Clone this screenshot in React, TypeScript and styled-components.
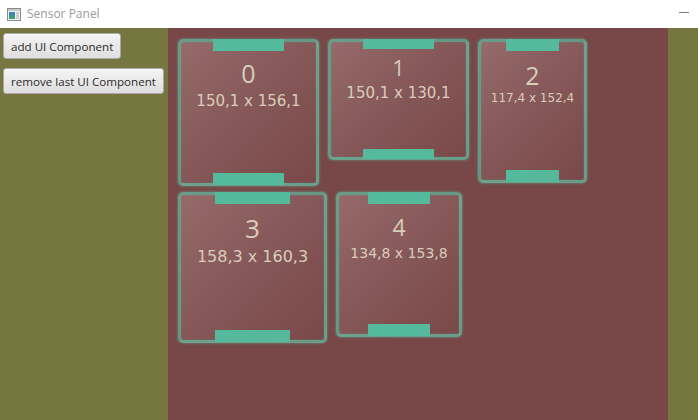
import React from "react";
import styled, { createGlobalStyle } from "styled-components";

const Global = createGlobalStyle`
  html, body { margin: 0; padding: 0; }
  body { font-family: "Open Sans", "Liberation Sans", sans-serif; background: #ffffff; }
  #root { width: 698px; height: 420px; overflow: hidden; }
`;

const Window = styled.div`
  width: 698px;
  height: 420px;
  display: flex;
  flex-direction: column;
`;

const TitleBar = styled.div`
  height: 28px;
  flex: none;
  background: #ffffff;
  display: flex;
  align-items: center;
  padding: 0 0 0 7px;
  box-sizing: border-box;
`;

const TitleText = styled.span`
  margin-left: 6px;
  font-size: 12px;
  color: #9a9a9a;
  flex: 1;
  margin-top: -2px;
`;

const MinimizeLine = styled.div`
  width: 10px;
  height: 1px;
  background: #7a7a7a;
  margin-right: 9px;
  margin-top: -4px;
`;

const Body = styled.div`
  flex: 1;
  display: flex;
  background: #767640;
`;

const Sidebar = styled.div`
  width: 168px;
  flex: none;
  display: flex;
  flex-direction: column;
  align-items: flex-start;
  gap: 9px;
  padding: 5px 0 0 3px;
  box-sizing: border-box;
`;

const Button = styled.button`
  height: 26px;
  padding: 0 7px;
  white-space: nowrap;
  font-family: "Open Sans", "Liberation Sans", sans-serif;
  font-size: 11.6px;
  color: #2a2a2a;
  background: linear-gradient(#f4f4f4, #dedede);
  border: 1px solid #a9a9a9;
  border-radius: 3px;
  box-shadow: inset 0 1px 0 #ffffff;
  cursor: default;
`;

const Stage = styled.div`
  width: 500px;
  flex: none;
  background: #784747;
  display: flex;
  flex-wrap: wrap;
  align-items: flex-start;
  align-content: flex-start;
  column-gap: 9px;
  row-gap: 6px;
  padding: 11px 10px;
  box-sizing: border-box;
`;

const RightGutter = styled.div`
  flex: 1;
`;

const Card = styled.div<{ $w: number; $h: number }>`
  width: ${(p) => p.$w}px;
  height: ${(p) => p.$h}px;
  box-sizing: border-box;
  border: 3px solid rgba(92, 186, 158, 0.7);
  border-radius: 5px;
  box-shadow: 0 0 2px 1px rgba(92, 186, 158, 0.35),
    inset 0 0 2px rgba(92, 186, 158, 0.4);
  background: linear-gradient(135deg, #966a6a 0%, #87595a 45%, #7a4848 100%);
  display: flex;
  flex-direction: column;
  align-items: center;
`;

const Bar = styled.div<{ $h: number; $top?: boolean }>`
  width: 52%;
  height: ${(p) => p.$h}px;
  flex: none;
  background: #55b99b;
  margin-top: ${(p) => (p.$top ? "-3px" : "0")};
  margin-bottom: ${(p) => (p.$top ? "0" : "-2px")};
`;

const Content = styled.div`
  flex: 1;
  display: flex;
  flex-direction: column;
  align-items: center;
  color: #d8cdb9;
  white-space: nowrap;
  font-family: "DejaVu Sans", "Open Sans", sans-serif;
`;

const Num = styled.div<{ $size: number; $top: number }>`
  font-family: "Open Sans", "DejaVu Sans", sans-serif;
  font-size: ${(p) => p.$size}px;
  line-height: ${(p) => Math.round(p.$size * 1.2)}px;
  margin-top: ${(p) => p.$top}px;
`;

const Dims = styled.div<{ $size: number; $gap: number }>`
  font-size: ${(p) => p.$size}px;
  line-height: ${(p) => Math.round(p.$size * 1.2)}px;
  margin-top: ${(p) => p.$gap}px;
`;

type C = {
  id: string;
  dims: string;
  w: number;
  h: number;
  bar: number;
  ns: number;
  ds: number;
  nc: number;
  dc: number;
};

const cards: C[] = [
  { id: "0", dims: "150,1 x 156,1", w: 141, h: 147, bar: 12, ns: 25, ds: 15, nc: 34, dc: 62 },
  { id: "1", dims: "150,1 x 130,1", w: 141, h: 121, bar: 10, ns: 21, ds: 15, nc: 29, dc: 54 },
  { id: "2", dims: "117,4 x 152,4", w: 109, h: 144, bar: 12, ns: 25, ds: 12, nc: 36, dc: 59 },
  { id: "3", dims: "158,3 x 160,3", w: 149, h: 151, bar: 12, ns: 26, ds: 16, nc: 36, dc: 64 },
  { id: "4", dims: "134,8 x 153,8", w: 126, h: 145, bar: 12, ns: 23, ds: 14, nc: 35, dc: 61 },
];

const AppIcon = () => (
  <svg width="14" height="13" viewBox="0 0 14 13">
    <defs>
      <linearGradient id="ig" x1="0" y1="0" x2="0" y2="1">
        <stop offset="0" stopColor="#3a7cc8" />
        <stop offset="1" stopColor="#3aa86a" />
      </linearGradient>
    </defs>
    <rect x="0.5" y="0.5" width="13" height="12" fill="#f2f2f2" stroke="#8a8a8a" />
    <rect x="1" y="1" width="12" height="2" fill="#c8c8c8" />
    <rect x="2" y="4" width="6" height="7" fill="url(#ig)" />
    <rect x="9" y="4" width="3" height="7" fill="#d0d0d0" />
  </svg>
);

export default function App() {
  return (
    <Window>
      <Global />
      <TitleBar>
        <AppIcon />
        <TitleText>Sensor Panel</TitleText>
        <MinimizeLine />
      </TitleBar>
      <Body>
        <Sidebar>
          <Button>add UI Component</Button>
          <Button>remove last UI Component</Button>
        </Sidebar>
        <Stage>
          {cards.map((c) => {
            const l1 = Math.round(c.ns * 1.2);
            const l2 = Math.round(c.ds * 1.2);
            const top = c.nc - l1 / 2 - 3 - (c.bar - 3);
            const gap = c.dc - l2 / 2 - (c.nc + l1 / 2);
            return (
              <Card key={c.id} $w={c.w} $h={c.h}>
                <Bar $h={c.bar} $top />
                <Content>
                  <Num $size={c.ns} $top={top}>{c.id}</Num>
                  <Dims $size={c.ds} $gap={gap}>{c.dims}</Dims>
                </Content>
                <Bar $h={c.bar} />
              </Card>
            );
          })}
        </Stage>
        <RightGutter />
      </Body>
    </Window>
  );
}
